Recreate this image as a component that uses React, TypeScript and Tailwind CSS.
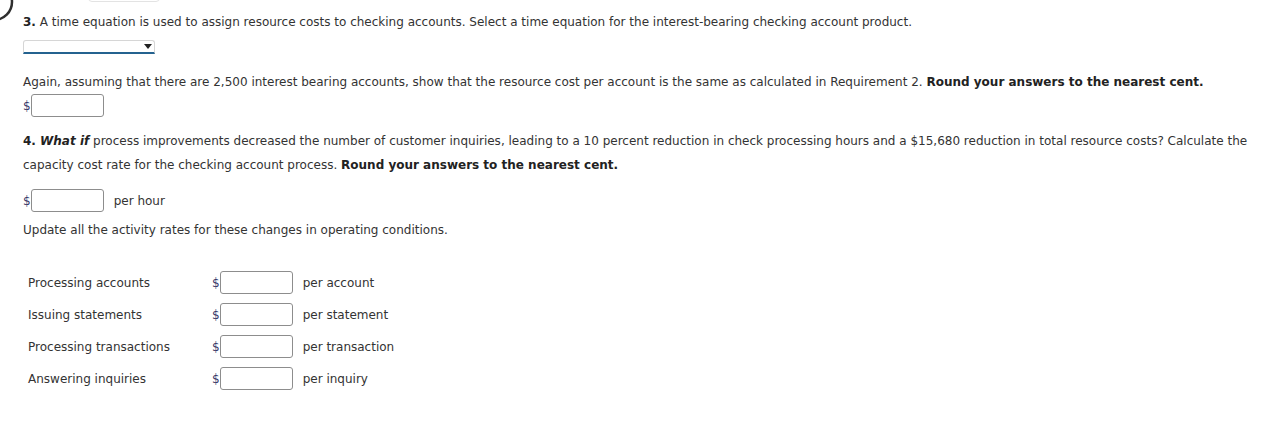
import React from 'react';

const font = { fontFamily: 'Verdana, "DejaVu Sans", sans-serif' };

function MoneyInput() {
  return (
    <span className="inline-flex items-center">
      <span className="text-[#3a3a6a]">$</span>
      <input
        type="text"
        className="w-[73px] h-[23px] border border-[#8d8d8d] rounded-[3px] bg-white outline-none px-1 text-[12px]"
      />
    </span>
  );
}

const rates = [
  { label: 'Processing accounts', unit: 'per account' },
  { label: 'Issuing statements', unit: 'per statement' },
  { label: 'Processing transactions', unit: 'per transaction' },
  { label: 'Answering inquiries', unit: 'per inquiry' },
];

export default function App() {
  return (
    <div className="relative w-[1282px] h-[437px] bg-white text-[#333333] text-[12px] overflow-hidden" style={font}>
      {/* bits of overlapping widgets cut off at the top edge */}
      <svg className="absolute left-0 top-0" width="20" height="24" viewBox="0 0 20 24">
        <circle cx="-6" cy="2" r="18" fill="none" stroke="#2f2f2f" strokeWidth="2.5" />
      </svg>
      <div className="absolute left-[88px] top-[-6px] w-[72px] h-[8px] rounded-b-[4px] border border-[#e3e3e3] bg-white" />

      <div className="pl-[23px] pt-[12px]">
        <p className="leading-[20px]">
          <b className="text-[#222]">3.</b> A time equation is used to assign resource costs to checking accounts. Select a time equation for the interest-bearing checking account product.
        </p>
        <div className="mt-[8px] relative w-[132px] h-[14px] rounded-t-[3px] border border-[#d6d6d6] border-b-2 border-b-[#24628f] bg-white">
          <span className="absolute right-[2px] top-[3px] w-0 h-0 border-l-[4px] border-r-[4px] border-t-[5px] border-l-transparent border-r-transparent border-t-[#222]" />
        </div>

        <p className="mt-[18px] leading-[20px]">
          Again, assuming that there are 2,500 interest bearing accounts, show that the resource cost per account is the same as calculated in Requirement 2. <b className="text-[#222]">Round your answers to the nearest cent.</b>
        </p>
        <div className="mt-[2px]">
          <MoneyInput />
        </div>

        <p className="mt-[12px] leading-[24px] pr-[20px]">
          <b className="text-[#222]">4. <i>What if</i></b> process improvements decreased the number of customer inquiries, leading to a 10 percent reduction in check processing hours and a $15,680 reduction in total resource costs? Calculate the capacity cost rate for the checking account process. <b className="text-[#222]">Round your answers to the nearest cent.</b>
        </p>
        <div className="mt-[12px] flex items-center">
          <MoneyInput />
          <span className="ml-[10px]">per hour</span>
        </div>
        <p className="mt-[8px] leading-[20px]">Update all the activity rates for these changes in operating conditions.</p>

        <div className="mt-[31px] flex flex-col gap-[9px] pl-[5px]">
          {rates.map((r) => (
            <div key={r.label} className="flex items-center">
              <span className="w-[184px]">{r.label}</span>
              <MoneyInput />
              <span className="ml-[10px]">{r.unit}</span>
            </div>
          ))}
        </div>
      </div>
    </div>
  );
}
